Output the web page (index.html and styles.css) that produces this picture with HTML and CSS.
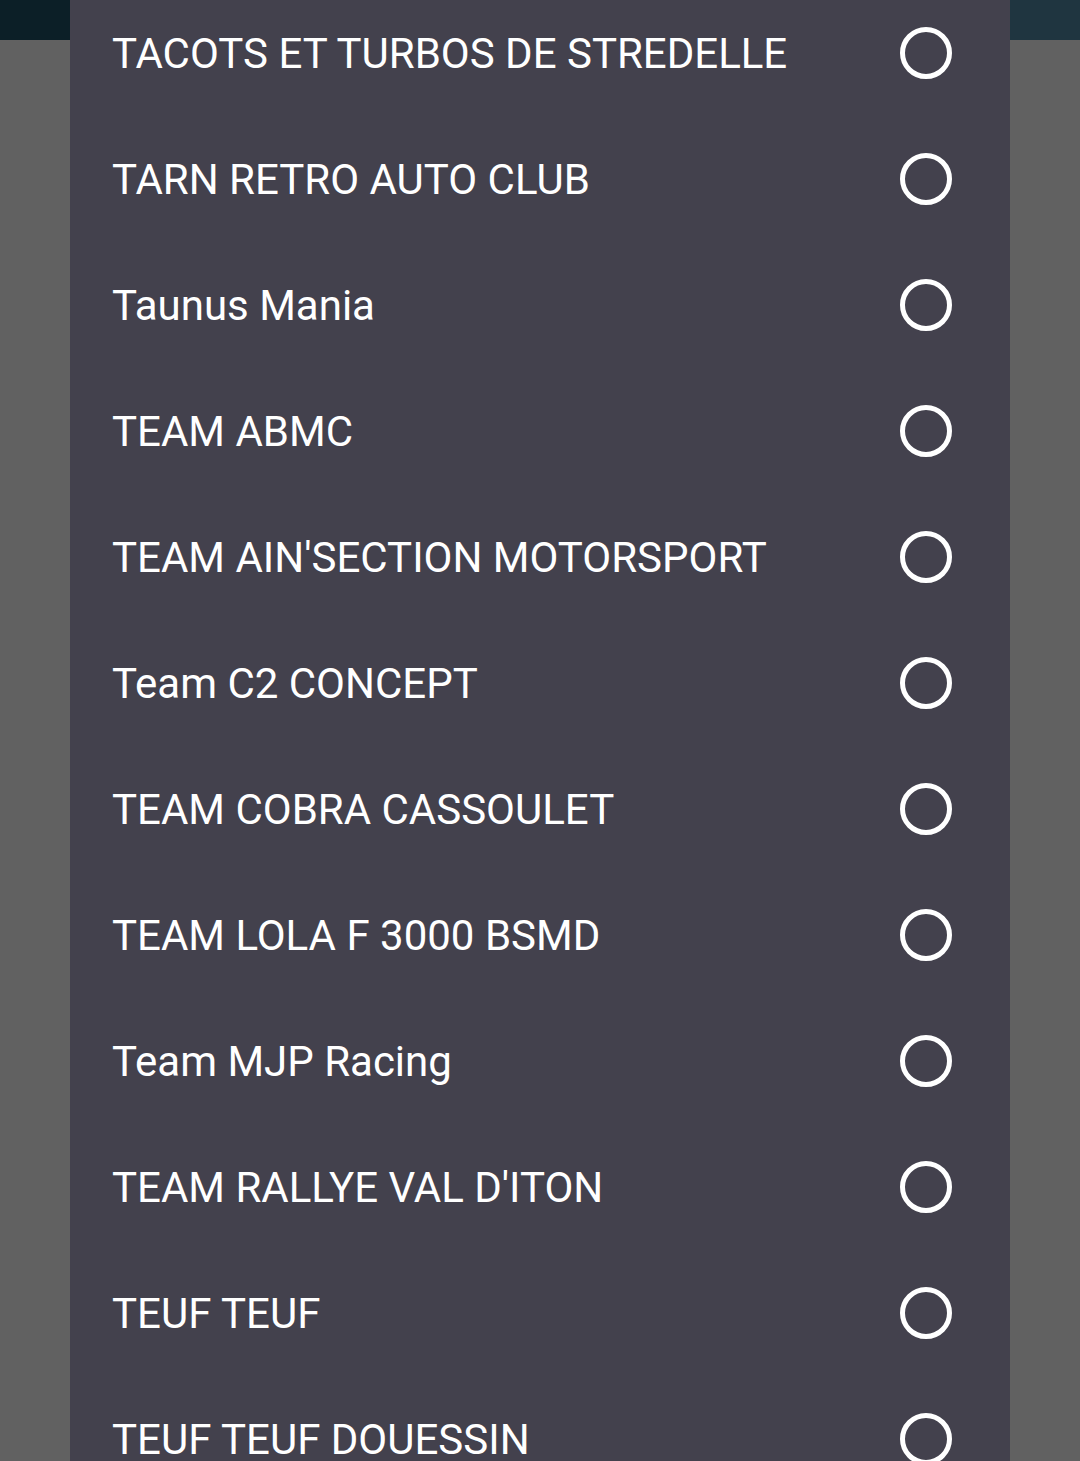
FILE: index.html
```html
<!DOCTYPE html>
<html>
<head>
<meta charset="utf-8">
<link rel="stylesheet" href="styles.css">
</head>
<body>
<div class="appbar"></div>
<div class="scrim"></div>
<div class="dialog">
  <ul class="list">
    <li class="row"><span class="label">TACOTS ET TURBOS DE STREDELLE</span><span class="radio"></span></li>
    <li class="row"><span class="label">TARN RETRO AUTO CLUB</span><span class="radio"></span></li>
    <li class="row"><span class="label">Taunus Mania</span><span class="radio"></span></li>
    <li class="row"><span class="label">TEAM ABMC</span><span class="radio"></span></li>
    <li class="row"><span class="label">TEAM AIN'SECTION MOTORSPORT</span><span class="radio"></span></li>
    <li class="row"><span class="label">Team C2 CONCEPT</span><span class="radio"></span></li>
    <li class="row"><span class="label">TEAM COBRA CASSOULET</span><span class="radio"></span></li>
    <li class="row"><span class="label">TEAM LOLA F 3000 BSMD</span><span class="radio"></span></li>
    <li class="row"><span class="label">Team MJP Racing</span><span class="radio"></span></li>
    <li class="row"><span class="label">TEAM RALLYE VAL D'ITON</span><span class="radio"></span></li>
    <li class="row"><span class="label">TEUF TEUF</span><span class="radio"></span></li>
    <li class="row"><span class="label">TEUF TEUF DOUESSIN</span><span class="radio"></span></li>
  </ul>
</div>
</body>
</html>
```

FILE: styles.css
```css
html, body {
  margin: 0;
  padding: 0;
  width: 1080px;
  height: 1461px;
  overflow: hidden;
  background: #616161;
  font-family: Roboto, "Liberation Sans", sans-serif;
}
.appbar {
  height: 40px;
  background: linear-gradient(to right, #0c1f27 0%, #0c1f27 50%, #1f3540 50%, #1f3540 100%);
}
.scrim {
  height: 1421px;
  background: #616161;
}
.dialog {
  position: absolute;
  top: -10px;
  left: 70px;
  width: 940px;
  bottom: 0;
  background: #43414d;
  overflow: hidden;
}
.list {
  list-style: none;
  margin: 0;
  padding: 0;
}
.row {
  height: 126px;
  display: flex;
  align-items: center;
  justify-content: space-between;
  padding: 0 58px 0 42px;
}
.label {
  color: #ffffff;
  font-size: 42px;
  white-space: nowrap;
}
.radio {
  width: 42px;
  height: 42px;
  border: 5px solid #ffffff;
  border-radius: 50%;
  flex: none;
}
```
